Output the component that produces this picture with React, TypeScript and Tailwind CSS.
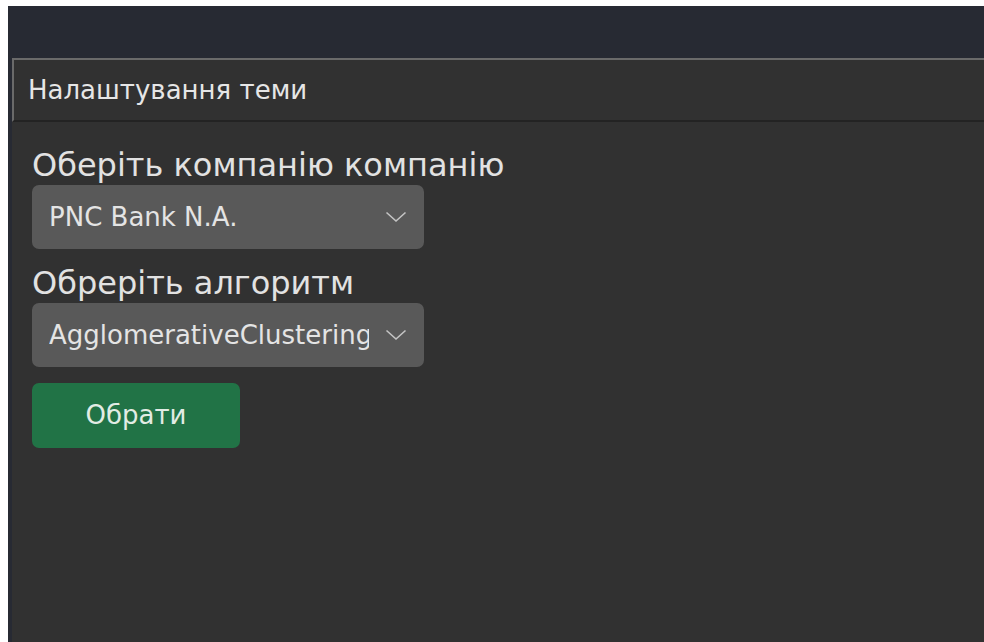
import React, { useState } from 'react';

const font = { fontFamily: '"DejaVu Sans", "Noto Sans", sans-serif' };

interface DropdownProps {
  value: string;
}

// Closed dropdown: grey box, value clipped before the chevron
const Dropdown: React.FC<DropdownProps> = ({ value }) => (
  <div className="flex h-[64px] w-[392px] items-center rounded-[7px] bg-[#595959] pl-[17px]">
    <div className="w-[320px] overflow-hidden whitespace-nowrap text-[26px] leading-[34px] text-[#e4e4e4]">
      {value}
    </div>
    <div className="flex flex-1 justify-center pr-[2px]">
      <svg width="22" height="12" viewBox="0 0 22 12" fill="none">
        <path d="M1.5 1.5 L11 10 L20.5 1.5" stroke="#c4c4c4" strokeWidth="1.6" />
      </svg>
    </div>
  </div>
);

const App: React.FC = () => {
  const [company] = useState('PNC Bank N.A.');
  const [algorithm] = useState('AgglomerativeClustering');

  return (
    <div className="h-[642px] overflow-hidden bg-white pl-[8px] pt-[6px]" style={font}>
      <div className="flex h-full flex-col bg-[#272a33]">
        {/* top bar */}
        <div className="h-[52px] shrink-0" />

        <div className="ml-[4px] flex flex-1 flex-col bg-[#313131]">
          {/* panel header */}
          <div className="flex h-[64px] items-center border-l-2 border-t-2 border-b-2 border-l-[#6a6a6a] border-t-[#6a6a6a] border-b-[#232323] pl-[14px] text-[26px] text-[#e6e6e6]">
            Налаштування теми
          </div>

          {/* settings form */}
          <div className="flex flex-col pl-[20px] pt-[24px]">
            <label className="text-[32px] leading-[38px] text-[#e2e2e2]">Оберіть компанію компанію</label>
            <div className="mt-[1px]">
              <Dropdown value={company} />
            </div>

            <label className="mt-[15px] text-[32px] leading-[38px] text-[#e2e2e2]">Обреріть алгоритм</label>
            <div className="mt-[1px]">
              <Dropdown value={algorithm} />
            </div>

            <button
              type="button"
              className="mt-[16px] flex h-[65px] w-[208px] items-center justify-center rounded-[7px] bg-[#217346] text-[26px] text-[#e2ece4]"
            >
              Обрати
            </button>
          </div>
        </div>
      </div>
    </div>
  );
};

export default App;
